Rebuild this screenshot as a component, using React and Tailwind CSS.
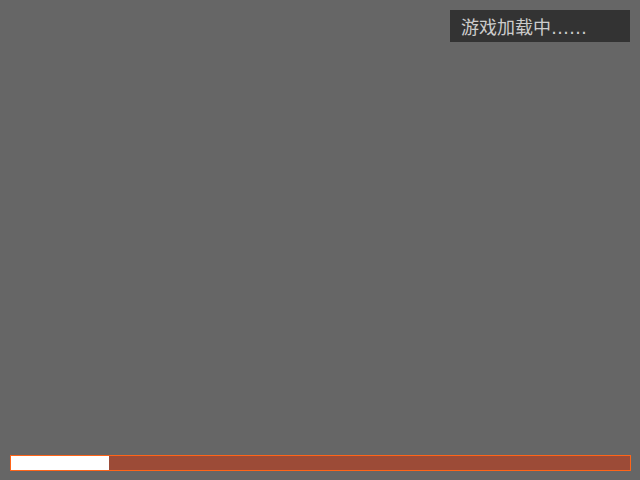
import React from "react";

const App = () => {
  const progress = 98 / 619;

  return (
    <div className="w-[640px] h-[480px] bg-[#666666] flex flex-col" style={{ fontFamily: '"Noto Sans", "Noto Sans CJK SC", sans-serif' }}>
      <div className="flex justify-end pt-[10px] pr-[10px]">
        <div className="w-[180px] h-[32px] bg-[#333333] text-[#cccccc] text-[18px] leading-[34px] pl-[11px]">
          游戏加载中<span className="font-['DejaVu_Sans']">……</span>
        </div>
      </div>
      <div className="flex-1" />
      <div className="pl-[10px] pb-[9px]">
        <div className="w-[621px] h-[16px] border border-[#ff6418] bg-[#9c4b37]">
          <div className="h-full bg-white" style={{ width: `${progress * 100}%` }} />
        </div>
      </div>
    </div>
  );
};

export default App;
